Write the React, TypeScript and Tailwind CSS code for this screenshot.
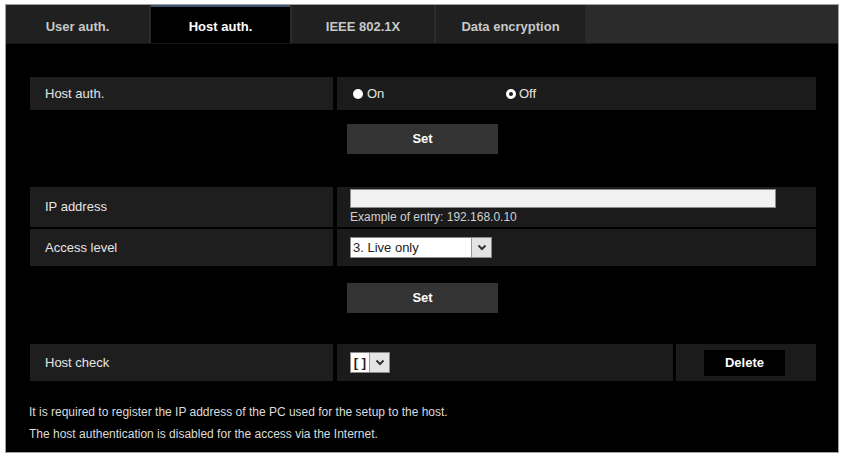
import React from 'react'

const font = { fontFamily: '"Liberation Sans", Arial, sans-serif' }

function Tab({ label, w, active }: { label: string; w: string; active?: boolean }) {
  return (
    <div
      className={
        active
          ? `${w} h-full flex items-center justify-center pt-[4px] bg-black border-t-2 border-[#3b5670] text-white font-bold text-[13px]`
          : `${w} h-full flex items-center justify-center pt-[6px] bg-[#202020] text-[#c8c8c8] font-bold text-[13px]`
      }
    >
      {label}
    </div>
  )
}

function SetButton() {
  return (
    <div className="ml-[317px] w-[151px] h-[30px] bg-[#333333] flex items-center justify-center text-white font-bold text-[13px]">
      Set
    </div>
  )
}

function Label({ children, h }: { children: React.ReactNode; h: string }) {
  return (
    <div className={`w-[303px] ${h} bg-[#1e1e1e] flex items-center pl-[15px] text-[13px] text-[#e6e6e6]`}>
      {children}
    </div>
  )
}

function Arrow() {
  return (
    <span className="w-[20px] h-[19px] bg-[#e4e4e4] border-l border-[#9a9a9a] flex items-center justify-center">
      <svg width="10" height="7" viewBox="0 0 10 7">
        <path d="M1.5 1.5 L5 5 L8.5 1.5" stroke="#333" strokeWidth="2" fill="none" />
      </svg>
    </span>
  )
}

export default function App() {
  return (
    <div className="w-[843px] h-[456px] bg-white pt-[4px] pl-[5px]" style={font}>
      <div className="w-[834px] h-[449px] bg-black border border-[#a0a0a0] flex flex-col">
        {/* tab bar */}
        <div className="h-[39px] bg-[#2b2b2b] flex gap-[2px] border-b border-[#151515]">
          <Tab label="User auth." w="w-[143px]" />
          <Tab label="Host auth." w="w-[139px]" active />
          <Tab label="IEEE 802.1X" w="w-[142px]" />
          <Tab label="Data encryption" w="w-[149px]" />
        </div>

        <div className="pl-[24px] pt-[33px] flex flex-col">
          {/* host auth row */}
          <div className="flex gap-[4px] h-[33px]">
            <Label h="h-[33px]">Host auth.</Label>
            <div className="w-[479px] h-full bg-[#1b1b1b] flex items-center text-[13px] text-[#e6e6e6]">
              <div className="ml-[16px] flex items-center gap-[4px] w-[153px]">
                <span className="w-[10px] h-[10px] rounded-full bg-white" />
                <span>On</span>
              </div>
              <div className="flex items-center gap-[3px]">
                <span className="w-[10px] h-[10px] rounded-full border-[3px] border-white bg-[#1b1b1b]" />
                <span>Off</span>
              </div>
            </div>
          </div>

          <div className="mt-[14px]">
            <SetButton />
          </div>

          {/* ip address */}
          <div className="mt-[33px] flex gap-[4px] h-[40px]">
            <Label h="h-[40px]">IP address</Label>
            <div className="w-[479px] h-full bg-[#1b1b1b] pl-[13px] pt-[2px] flex flex-col">
              <div className="w-[426px] h-[19px] bg-[#f2f2f2] border border-[#8a8a8a]" />
              <div className="text-[12px] text-[#d0d0d0] leading-[16px] mt-[1px]">Example of entry: 192.168.0.10</div>
            </div>
          </div>

          {/* access level */}
          <div className="mt-[2px] flex gap-[4px] h-[37px]">
            <Label h="h-[37px]">Access level</Label>
            <div className="w-[479px] h-full bg-[#1b1b1b] pl-[13px] flex items-center">
              <div className="w-[142px] h-[21px] bg-white border border-[#8a8a8a] flex items-center">
                <span className="flex-1 pl-[2px] text-[13px] text-[#222222]">3. Live only</span>
                <Arrow />
              </div>
            </div>
          </div>

          <div className="mt-[17px]">
            <SetButton />
          </div>

          {/* host check */}
          <div className="mt-[31px] flex gap-[4px] h-[37px]">
            <Label h="h-[37px]">Host check</Label>
            <div className="w-[336px] h-full bg-[#1b1b1b] pl-[13px] flex items-center">
              <div className="h-[21px] w-[40px] bg-white border border-[#8a8a8a] flex items-center">
                <span className="w-[18px] text-[13px] font-bold text-[#222222] text-center">[ ]</span>
                <Arrow />
              </div>
            </div>
            <div className="ml-[-1px] w-[140px] h-full bg-[#1b1b1b] flex items-center pl-[28px]">
              <div className="w-[81px] h-[26px] bg-black flex items-center justify-center text-white font-bold text-[13px]">
                Delete
              </div>
            </div>
          </div>

          {/* notes */}
          <div className="mt-[20px] ml-[-1px] text-[12px] leading-[22px] text-[#dcdcdc]">
            <div>It is required to register the IP address of the PC used for the setup to the host.</div>
            <div>The host authentication is disabled for the access via the Internet.</div>
          </div>
        </div>
      </div>
    </div>
  )
}
